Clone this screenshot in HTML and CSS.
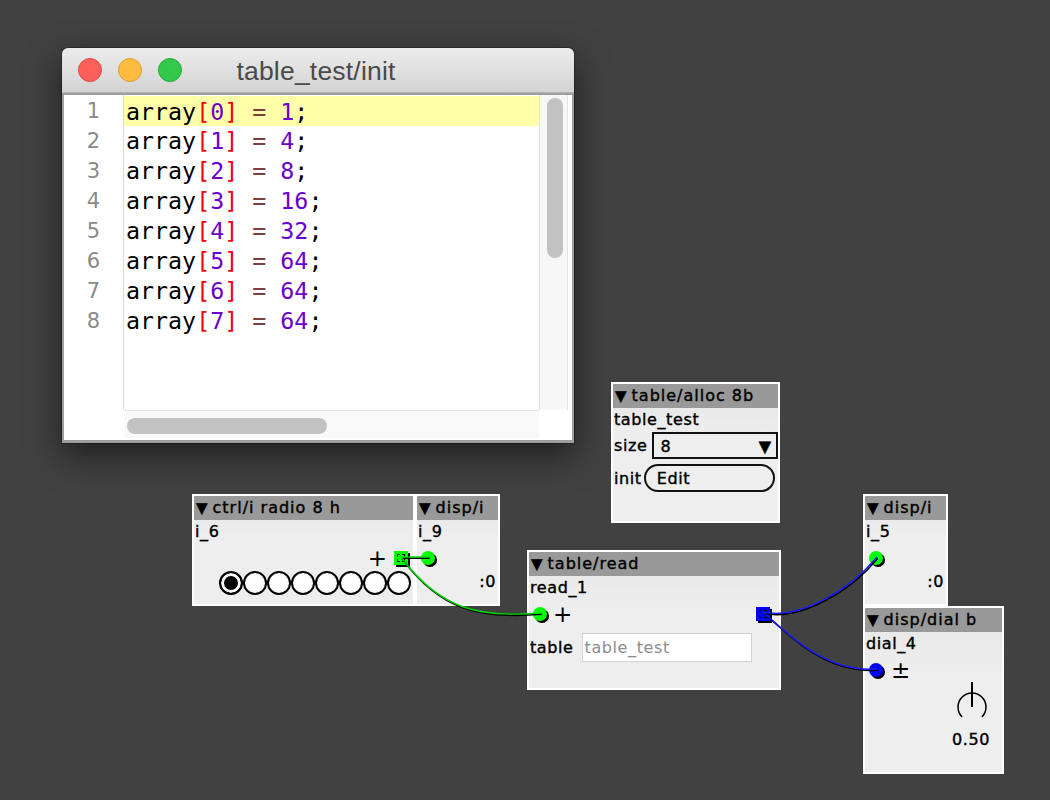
FILE: index.html
```html
<!DOCTYPE html>
<html>
<head>
<meta charset="utf-8">
<link rel="stylesheet" href="styles.css">
</head>
<body>
<div class="desk">
  <div class="window">
    <div class="titlebar">
      <div class="lights"><span class="light red"></span><span class="light yellow"></span><span class="light green"></span></div>
      <div class="title">table_test/init</div>
      <div></div>
    </div>
    <div class="frame">
      <div class="gutter">
        <div>1</div><div>2</div><div>3</div><div>4</div><div>5</div><div>6</div><div>7</div><div>8</div>
      </div>
      <div class="code">
        <div class="ln cur"><span>array</span><span class="br">[</span><span class="num">0</span><span class="br">]</span> <span class="op">=</span> <span class="num">1</span>;</div>
        <div class="ln"><span>array</span><span class="br">[</span><span class="num">1</span><span class="br">]</span> <span class="op">=</span> <span class="num">4</span>;</div>
        <div class="ln"><span>array</span><span class="br">[</span><span class="num">2</span><span class="br">]</span> <span class="op">=</span> <span class="num">8</span>;</div>
        <div class="ln"><span>array</span><span class="br">[</span><span class="num">3</span><span class="br">]</span> <span class="op">=</span> <span class="num">16</span>;</div>
        <div class="ln"><span>array</span><span class="br">[</span><span class="num">4</span><span class="br">]</span> <span class="op">=</span> <span class="num">32</span>;</div>
        <div class="ln"><span>array</span><span class="br">[</span><span class="num">5</span><span class="br">]</span> <span class="op">=</span> <span class="num">64</span>;</div>
        <div class="ln"><span>array</span><span class="br">[</span><span class="num">6</span><span class="br">]</span> <span class="op">=</span> <span class="num">64</span>;</div>
        <div class="ln"><span>array</span><span class="br">[</span><span class="num">7</span><span class="br">]</span> <span class="op">=</span> <span class="num">64</span>;</div>
      </div>
      <div class="vscroll"><div class="vthumb"></div></div>
      <div class="gfoot"></div>
      <div class="hscroll"><div class="hthumb"></div></div>
      <div class="corner"></div>
    </div>
  </div>

  <div class="node n-alloc">
    <div class="hdr"><span class="tri">▼</span>table/alloc 8b</div>
    <div class="name">table_test</div>
    <div class="frow"><span>size</span><div class="combo"><span>8</span><span class="ctri">▼</span></div></div>
    <div class="frow frow-init"><span>init</span><div class="btn">Edit</div></div>
  </div>

  <div class="node n-radio">
    <div class="hdr"><span class="tri">▼</span>ctrl/i radio 8 h</div>
    <div class="name">i_6</div>
    <div class="iorow right"><span class="sym">+</span><span class="outlet green-io"></span></div>
    <div class="radios">
      <span class="rb on"></span><span class="rb"></span><span class="rb"></span><span class="rb"></span><span class="rb"></span><span class="rb"></span><span class="rb"></span><span class="rb"></span>
    </div>
  </div>

  <div class="node n-disp9">
    <div class="hdr"><span class="tri">▼</span>disp/i</div>
    <div class="name">i_9</div>
    <div class="iorow"><span class="inlet green-io"></span></div>
    <div class="val">:0</div>
  </div>

  <div class="node n-read">
    <div class="hdr"><span class="tri">▼</span>table/read</div>
    <div class="name">read_1</div>
    <div class="iorow"><span class="inlet green-io"></span><span class="sym">+</span><span class="outlet blue-io push"></span></div>
    <div class="trow"><span>table</span><div class="field">table_test</div></div>
  </div>

  <div class="node n-disp5">
    <div class="hdr"><span class="tri">▼</span>disp/i</div>
    <div class="name">i_5</div>
    <div class="iorow"><span class="inlet green-io"></span></div>
    <div class="val">:0</div>
  </div>

  <div class="node n-dial">
    <div class="hdr"><span class="tri">▼</span>disp/dial b</div>
    <div class="name">dial_4</div>
    <div class="iorow"><span class="inlet blue-io"></span><span class="sym">±</span></div>
    <div class="dialwrap">
      <svg class="dial" width="36" height="42" viewBox="0 0 36 42">
        <path d="M8.1 36.9 A14 14 0 1 1 27.9 36.9" fill="none" stroke="#000" stroke-width="1.5"/>
        <line x1="18" y1="2" x2="18" y2="27" stroke="#000" stroke-width="2"/>
      </svg>
      <div class="dialval">0.50</div>
    </div>
  </div>

  <svg class="wires" width="1050" height="800" viewBox="0 0 1050 800">
    <g fill="none" stroke="#000" stroke-width="1.6" transform="translate(0.8,1.2)">
      <path d="M401 557 L429 557"/>
      <path d="M401 557 C440 610 480 618 541 613"/>
      <path d="M763 612 C800 620 850 590 877 557"/>
      <path d="M763 612 C800 645 830 672 877 669"/>
    </g>
    <g fill="none" stroke-width="1.4">
      <path d="M401 557 L429 557" stroke="#00d000"/>
      <path d="M401 557 C440 610 480 618 541 613" stroke="#00d000"/>
      <path d="M763 612 C800 620 850 590 877 557" stroke="#1a1aff"/>
      <path d="M763 612 C800 645 830 672 877 669" stroke="#1a1aff"/>
    </g>
  </svg>
</div>
</body>
</html>
```

FILE: styles.css
```css
html, body {
  margin: 0;
  padding: 0;
}
body {
  background: #414141;
}
.desk {
  position: relative;
  width: 1050px;
  height: 800px;
  overflow: hidden;
  background: #414141;
}

/* ---------- editor window ---------- */
.window {
  position: absolute;
  left: 62px;
  top: 48px;
  width: 512px;
  border-radius: 6px 6px 0 0;
  box-shadow: 0 12px 34px rgba(0, 0, 0, 0.55), 0 0 0 1px rgba(0,0,0,0.25);
}
.titlebar {
  height: 44px;
  border-radius: 6px 6px 0 0;
  background: linear-gradient(#ececec, #d3d3d3);
  border-bottom: 1px solid #b3b3b3;
  display: grid;
  grid-template-columns: 1fr auto 1fr;
  align-items: center;
}
.lights {
  display: flex;
  gap: 16px;
  padding-left: 16px;
}
.light {
  width: 24px;
  height: 24px;
  box-sizing: border-box;
  border-radius: 50%;
}
.light.red { background: #fc605b; border: 1px solid #de4a44; }
.light.yellow { background: #fdbc40; border: 1px solid #dea032; }
.light.green { background: #34c84a; border: 1px solid #27a93a; }
.title {
  font-family: "Liberation Sans", Arial, sans-serif;
  font-size: 26.5px;
  color: #4a4a4a;
  letter-spacing: 0.2px;
  padding-top: 2px;
  margin-left: -4px;
}
.frame {
  border: 2px solid #9e9e9e;
  border-bottom-width: 3px;
  background: #fff;
  display: grid;
  grid-template-columns: 60px 415px 32px;
  grid-template-rows: 315px 30px;
}
.gutter {
  border-right: 1px solid #dcdcdc;
  padding-top: 1px;
  padding-right: 23px;
  text-align: right;
  font-family: "DejaVu Sans", sans-serif;
  font-size: 21px;
  line-height: 30px;
  color: #8a8a8a;
}
.code {
  padding-top: 2px;
  overflow: hidden;
  font-family: "DejaVu Sans Mono", monospace;
  font-size: 23.3px;
  line-height: 30px;
  color: #000;
}
.ln {
  height: 30px;
  padding-left: 2px;
  white-space: pre;
}
.ln.cur { background: #ffffaa; margin-top: -1px; padding-top: 1px; height: 29px; }
.br { color: #ff0000; }
.num { color: #6a00cc; }
.op { color: #7f3f3f; }
.vscroll {
  background: #f7f7f7;
  border-left: 1px solid #e3e3e3;
  border-right: 1px solid #e3e3e3;
  margin-right: 3px;
  padding: 3px 0 0 7px;
}
.vthumb {
  width: 16px;
  height: 160px;
  border-radius: 8px;
  background: #c2c2c2;
}
.gfoot { background: #fff; }
.hscroll {
  height: 28px;
  box-sizing: border-box;
  background: #f9f9f9;
  border-top: 1px solid #e3e3e3;
  padding: 7px 0 0 3px;
}
.hthumb {
  width: 200px;
  height: 16px;
  border-radius: 8px;
  background: #c2c2c2;
}
.corner { background: #fff; }

/* ---------- patch nodes ---------- */
.node {
  position: absolute;
  box-sizing: border-box;
  border: 2px solid #fff;
  background: linear-gradient(#e6e6e6, #eeeeee 40%);
  font-family: "DejaVu Sans", sans-serif;
  font-size: 16px;
  letter-spacing: 0.6px;
  color: #000;
  -webkit-text-stroke: 0.4px #000;
}
.hdr {
  height: 24px;
  line-height: 24px;
  background: #999999;
  padding-left: 2px;
  white-space: nowrap;
  overflow: hidden;
  letter-spacing: 1px;
}
.tri {
  font-size: 15px;
  letter-spacing: 0;
  margin-right: 5px;
}
.name {
  height: 24px;
  line-height: 24px;
  padding-left: 1px;
  white-space: nowrap;
}
.iorow {
  height: 28px;
  display: flex;
  align-items: center;
}
.iorow.right {
  justify-content: flex-end;
  padding-right: 5px;
  gap: 7px;
}
.sym {
  font-size: 23px;
  line-height: 24px;
  -webkit-text-stroke: 0;
  letter-spacing: 0;
}
.inlet {
  width: 14px;
  height: 14px;
  border-radius: 50%;
  box-shadow: 2px 2px 0 #000;
  margin-left: 4px;
  margin-right: 6px;
  flex: none;
}
.outlet {
  width: 14px;
  height: 14px;
  box-shadow: 2px 2px 0 #000;
  position: relative;
  flex: none;
}
.outlet::after {
  content: "";
  position: absolute;
  left: 3px;
  top: 3px;
  width: 6px;
  height: 6px;
  border: 1px dashed #000;
}
.outlet.push {
  margin-left: auto;
  margin-right: 9px;
}
.green-io { background: #00ff00; }
.blue-io { background: #0000ff; }

/* alloc */
.n-alloc { left: 611px; top: 382px; width: 169px; height: 141px; }
.frow {
  display: flex;
  align-items: center;
  gap: 5px;
  padding-left: 1px;
}
.combo {
  flex: 1;
  height: 27px;
  box-sizing: border-box;
  border: 2px solid #111;
  background: #eeeeee;
  display: flex;
  align-items: center;
  justify-content: space-between;
  padding: 2px 5px 0 6px;
}
.ctri { font-size: 16px; letter-spacing: 0; }
.frow-init { margin-top: 5px; gap: 2px; }
.btn {
  flex: 1;
  height: 28px;
  margin-right: 3px;
  box-sizing: border-box;
  border: 2px solid #111;
  border-radius: 14px;
  background: #eeeeee;
  line-height: 25px;
  padding-left: 11px;
}

/* radio */
.n-radio { left: 192px; top: 494px; width: 223px; height: 112px; }
.radios {
  display: flex;
  justify-content: flex-end;
  padding-right: 2px;
  margin-top: -1px;
}
.rb {
  width: 24px;
  height: 24px;
  box-sizing: border-box;
  border: 2px solid #000;
  border-radius: 50%;
  background: #fff;
}
.rb.on {
  background: #000;
  box-shadow: inset 0 0 0 3px #fff;
}

/* disp */
.n-disp9 { left: 415px; top: 494px; width: 85px; height: 112px; }
.n-disp5 { left: 863px; top: 494px; width: 85px; height: 112px; }
.val {
  text-align: right;
  padding-right: 2px;
  line-height: 24px;
  margin-top: -2px;
}

/* read */
.n-read { left: 527px; top: 550px; width: 254px; height: 140px; }
.trow {
  display: flex;
  align-items: center;
  gap: 8px;
  margin-top: 5px;
  padding-left: 1px;
}
.field {
  width: 170px;
  height: 29px;
  box-sizing: border-box;
  border: 1px solid #d2d2d2;
  background: #fff;
  color: #8c8c8c;
  -webkit-text-stroke: 0;
  line-height: 27px;
  padding-left: 2px;
}

/* dial */
.n-dial { left: 863px; top: 606px; width: 141px; height: 168px; }
.n-dial .inlet { margin-right: 8px; }
.dialwrap {
  display: flex;
  flex-direction: column;
  align-items: flex-end;
  padding-right: 12px;
}
.dial {
  display: block;
  margin-top: -4px;
}
.dialval {
  margin-top: 6px;
  line-height: 24px;
}

/* wires */
.wires {
  position: absolute;
  left: 0;
  top: 0;
  pointer-events: none;
}
```
